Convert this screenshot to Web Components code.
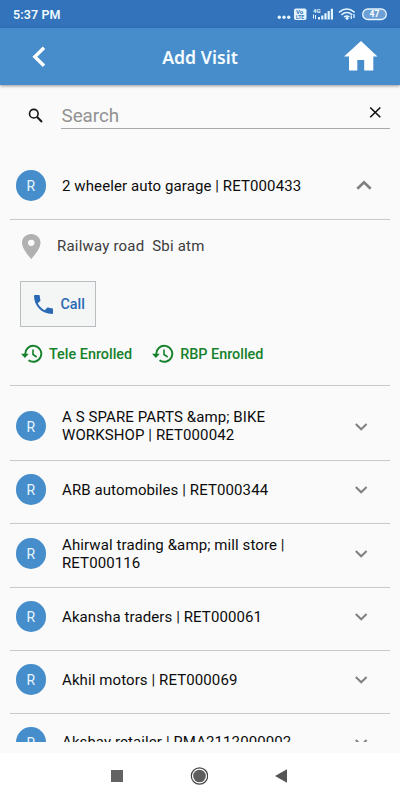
<!DOCTYPE html>
<html lang="en">
<head>
<meta charset="utf-8">
<title>Add Visit</title>
<style>
html,body{margin:0;padding:0}
body{width:400px;height:800px;overflow:hidden;background:#fafafa;font-family:Roboto,"Noto Sans",sans-serif;color:#111}
</style>
</head>
<body>
<visit-app></visit-app>
<script>
function define(name, html) {
  const t = document.createElement('template');
  t.innerHTML = html;
  customElements.define(name, class extends HTMLElement {
    constructor() {
      super();
      this.attachShadow({mode: 'open'}).appendChild(t.content.cloneNode(true));
    }
  });
}

define('status-bar', `
<style>
:host{display:flex;height:28px;background:#3373bb;color:#eefaff;align-items:center;box-sizing:border-box;padding:1px 13px 0 13px}
.time{font-size:12.5px;font-weight:600;letter-spacing:.1px;flex:1;white-space:nowrap;line-height:16px}
svg{display:block}
</style>
<span class="time">5:37 PM</span>
<svg width="111" height="20" viewBox="276 5 111 20" fill="#e3f5ff" font-family="Roboto,sans-serif">
<circle cx="279.3" cy="17.3" r="1.7"/><circle cx="284" cy="17.3" r="1.7"/><circle cx="288.7" cy="17.3" r="1.7"/>
<rect x="294" y="8.5" width="12.5" height="11.5" rx="1.8"/>
<text x="296" y="14" font-size="6" font-weight="700" fill="#3373bb">Vo</text>
<text x="296" y="19.2" font-size="5" font-weight="700" fill="#3373bb">LTE</text>
<text x="313" y="13" font-size="6" font-weight="700">4G</text>
<path d="M313 14.5h1v4h-1zM315 15h1v4h-1zM318 17h2v2.5h-2zM321.2 15.5h2.2v4h-2.2zM324.4 13.2h2.2v6.3h-2.2zM327.6 11h2.2v8.5h-2.2zM330.8 8.8h2.2v10.7h-2.2z"/>
<g fill="none" stroke="#e3f5ff" stroke-width="1.5"><path d="M339 12.3Q346.8 5.8 354.6 12.3M341.4 14.8Q346.8 10.4 352.2 14.8M344 17Q346.8 14.9 349.5 17"/></g>
<circle cx="347" cy="18.3" r="1.5"/>
<path d="M351.3 19v-3.5M354 18v-4" stroke="#e3f5ff" stroke-width="1.3"/>
<rect x="362.7" y="9" width="23.6" height="10.5" rx="5.25" fill="#6c9fd6" stroke="#e3f5ff" stroke-width="1.3"/>
<text x="374.5" y="17.3" text-anchor="middle" font-size="8.5" font-weight="700" fill="#fff">47</text>
</svg>`);

define('title-bar', `
<style>
:host{display:grid;grid-template-columns:80px 1fr 80px;height:57px;background:#478dcb;align-items:center;box-shadow:0 1px 3px rgba(0,0,0,.4);position:relative;color:#f6fcff}
.t{text-align:center;font:600 17.7px/24px "Noto Sans",sans-serif;padding-top:1px;white-space:nowrap}
svg{display:block}
</style>
<svg width="80" height="57" viewBox="0 28 80 57"><path d="M44 47.7L34.8 56.7L44 65.7" fill="none" stroke="#fff" stroke-width="3.4"/></svg>
<div class="t"><slot></slot></div>
<svg width="80" height="57" viewBox="320 28 80 57"><path d="M361 41L377.5 56.5H373.3V70.5H364.2V60H357.3V70.5H349V56.5H344Z" fill="#fff"/></svg>`);

define('search-field', `
<style>
:host{display:grid;grid-template-columns:61px 329px;height:44px;color:#919191}
.f{border-bottom:1px solid #a9a9a9;display:flex;justify-content:space-between;font-size:18.8px;line-height:24px;padding-top:19px;height:24px}
.f span{padding-left:.5px}
svg{display:block}
</style>
<svg width="61" height="44" viewBox="0 85 61 44" fill="none" stroke="#151515"><circle cx="33.8" cy="113.7" r="4.3" stroke-width="1.6"/><path d="M36.9 116.8L42 122" stroke-width="2"/></svg>
<div class="f"><span><slot></slot></span>
<svg width="28" height="24" viewBox="362 104 28 24"><path d="M370.2 107.5L380.3 117.3M380.3 107.5L370.2 117.3" stroke="#111" stroke-width="1.6"/></svg></div>`);

define('shop-row', `
<style>
:host{display:grid;grid-template-columns:52px 286px 1fr;box-sizing:border-box;height:var(--h,63px);padding-top:var(--p,13px);margin:0 10px;border-bottom:1px solid #c9c9c9;overflow:hidden}
.av{width:30.5px;height:30.5px;margin-left:5.5px;border-radius:50%;background:#458ecb;color:#e9f5ff;font-size:14px;line-height:32px;text-align:center}
.n{height:31px;display:flex;align-items:center;font-size:15px;line-height:18px;color:#0c0c0c;white-space:nowrap;letter-spacing:.1px}
svg{display:block;height:31px;width:32px}
:host([open]) .up,:host(:not([open])) .down{display:block}
.up,.down{display:none}
</style>
<div class="av">R</div>
<div class="n"><div><slot></slot></div></div>
<div><svg class="down" viewBox="0 0 32 31"><path d="M7.8 13L13.2 18.3L18.6 13" fill="none" stroke="#808080" stroke-width="2"/></svg>
<svg class="up" viewBox="0 0 32 31"><path d="M9.3 18.8L16 12.2L22.7 18.8" fill="none" stroke="#808080" stroke-width="2.6"/></svg></div>`);

define('call-button', `
<style>
:host{display:flex;box-sizing:border-box;width:76px;height:46px;border:1px solid #b9bcc0;background:#f4f6f6;align-items:center;padding-left:13px;gap:7.5px;color:#2769b3;font-size:14.3px;font-weight:500}
svg{display:block}
</style>
<svg width="19" height="19" viewBox="3 3 18 18" fill="#2a6ab5"><path d="M6.620 10.790c1.440 2.830 3.760 5.140 6.590 6.590l2.200-2.200c.27-.27.67-.36 1.020-.24 1.120.37 2.330.57 3.570.57.55 0 1 .45 1 1V20c0 .55-.45 1-1 1-9.390 0-17-7.610-17-17 0-.55.45-1 1-1h3.500c.55 0 1 .45 1 1 0 1.250.2 2.450.57 3.570.11.35.03.74-.25 1.020l-2.200 2.200z"/></svg>
<span><slot></slot></span>`);

define('enroll-tag', `
<style>
:host{display:flex;align-items:center;gap:6px;color:#15812a;font-size:14.4px;font-weight:500;white-space:nowrap}
svg{display:block}
</style>
<svg width="22" height="20" viewBox="0 0 22 20" fill="none" stroke="#15812a"><path d="M4.3 10.5A8 8 0 1 1 7.5 16.2" stroke-width="1.9"/><path d="M12 5.5V10.5L15.7 13" stroke-width="1.6"/><path d="M0 9.8H7.8L3.9 14Z" fill="#15812a" stroke="none"/></svg>
<span><slot></slot></span>`);

define('shop-details', `
<style>
:host{display:block;height:166px;box-sizing:border-box;margin:0 10px;border-bottom:1px solid #c9c9c9}
.a{display:flex;align-items:center;height:52px;font-size:15px;color:#3c3c3c;letter-spacing:.2px;white-space:pre}
.a svg{display:block;margin:0 16.5px 0 12px}
call-button{margin:9px 0 0 10px}
.e{display:flex;gap:20px;margin:16px 0 0 11px;height:22px;align-items:center}
</style>
<div class="a"><svg width="18.5" height="25" viewBox="5 2 14 20" preserveAspectRatio="none" fill="#b1b1b1"><path d="M12 2C8.130 2 5 5.130 5 9c0 5.250 7 13 7 13s7-7.750 7-13c0-3.870-3.130-7-7-7zm0 9.500a2.500 2.500 0 010-5 2.500 2.500 0 010 5z"/></svg><span><slot></slot></span></div>
<call-button>Call</call-button>
<div class="e"><enroll-tag>Tele Enrolled</enroll-tag><enroll-tag>RBP Enrolled</enroll-tag></div>`);

define('nav-bar', `
<style>
:host{display:grid;grid-template-columns:repeat(3,1fr);width:246px;padding:0 78px 1px 76px;height:46px;background:#fff;align-items:center;justify-items:center}
svg{display:block}
</style>
<svg width="12" height="12"><rect width="12" height="12" fill="#636363"/></svg>
<svg width="18" height="18" viewBox="0 0 18 18"><circle cx="9.5" cy="9" r="8.2" fill="none" stroke="#444" stroke-width="1.2"/><circle cx="9.5" cy="9" r="6.3" fill="#5e5e5e"/></svg>
<svg width="12" height="14"><path d="M12 .3V13.7L0 7Z" fill="#555"/></svg>`);

define('visit-app', `
<style>
:host{display:flex;flex-direction:column;width:400px;height:800px;background:#fafafa}
.list{height:612.5px;flex:none;overflow:hidden}
nav-bar{margin-top:auto}
</style>
<status-bar></status-bar>
<title-bar>Add Visit</title-bar>
<search-field>Search</search-field>
<div class="list">
<shop-row open style="--h:91px;--p:41px">2 wheeler auto garage | RET000433</shop-row>
<shop-details>Railway road&nbsp; Sbi atm</shop-details>
<shop-row style="--h:75px;--p:24.5px">A S SPARE PARTS &amp;amp; BIKE<br>WORKSHOP | RET000042</shop-row>
<shop-row>ARB automobiles | RET000344</shop-row>
<shop-row style="--h:64px;--p:14px">Ahirwal trading &amp;amp; mill store |<br>RET000116</shop-row>
<shop-row>Akansha traders | RET000061</shop-row>
<shop-row>Akhil motors | RET000069</shop-row>
<shop-row style="--p:12.5px">Akshay retailer | RMA2112000002</shop-row>
</div>
<nav-bar></nav-bar>`);
</script>
</body>
</html>
